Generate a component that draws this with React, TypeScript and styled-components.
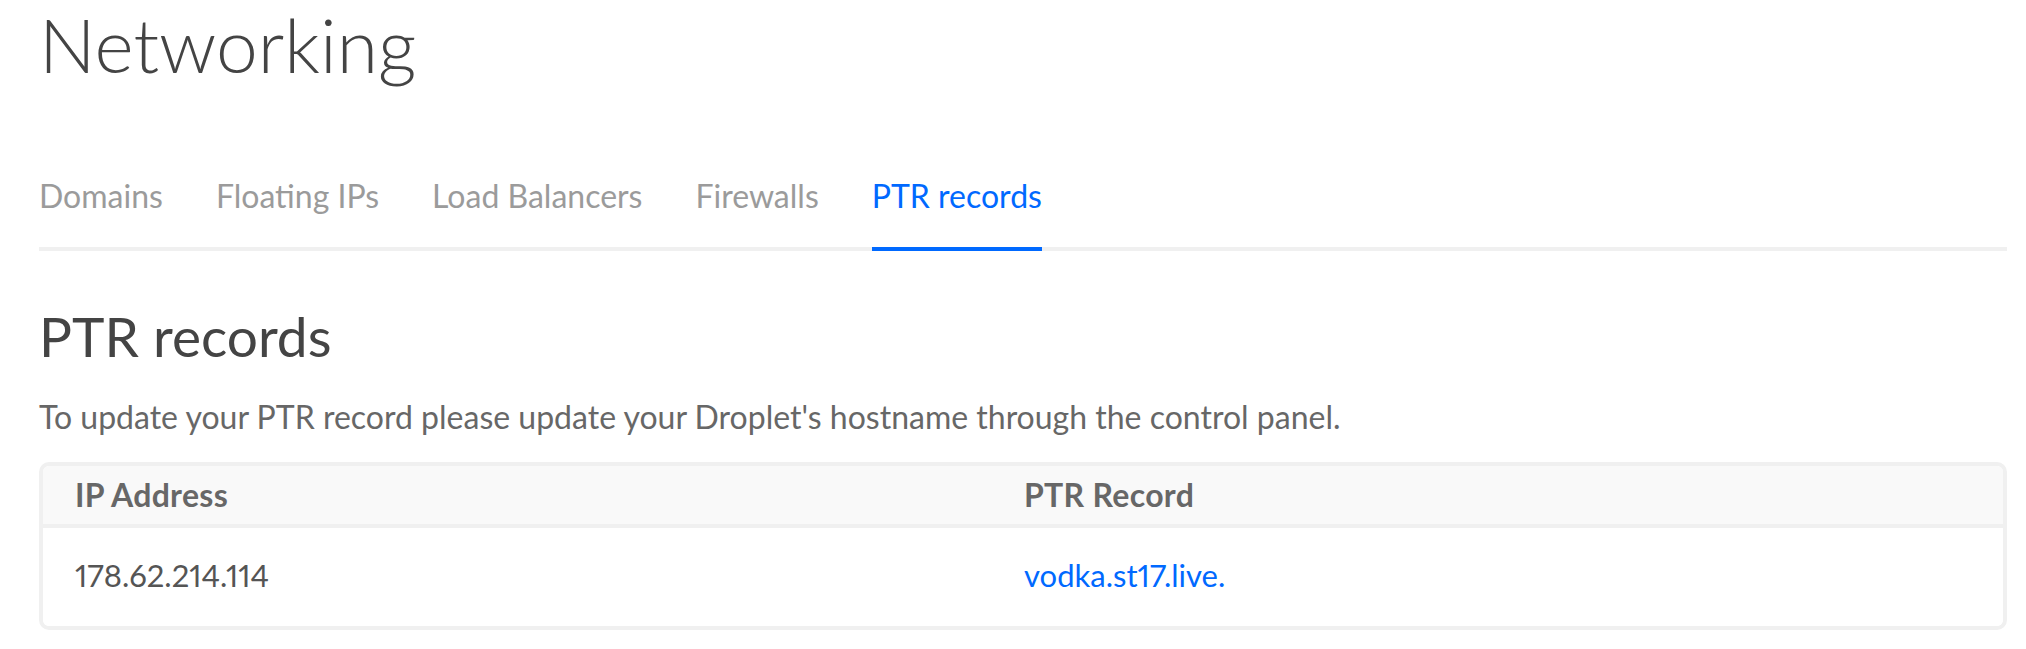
import React from "react";
import styled, { createGlobalStyle } from "styled-components";

const GlobalStyle = createGlobalStyle`
  html, body { margin: 0; padding: 0; background: #ffffff; }
  body { font-family: Lato, "Open Sans", "Liberation Sans", sans-serif; -webkit-font-smoothing: antialiased; }
`;

const Page = styled.div`
  padding: 0 19px 0 39px;
  display: flex;
  flex-direction: column;
`;

const Title = styled.h1`
  margin: 0;
  padding: 8px 0 0 0;
  font-size: 75px;
  line-height: 72px;
  font-weight: 300;
  color: #444444;
`;

const TabBar = styled.nav`
  display: flex;
  gap: 53px;
  margin-top: 96px;
  border-bottom: 4px solid #f0f0f0;
`;

const Tab = styled.a<{ $active?: boolean }>`
  display: block;
  font-size: 32px;
  line-height: 40px;
  padding-bottom: 31px;
  margin-bottom: -4px;
  color: ${(p) => (p.$active ? "#0069ff" : "#9b9b9b")};
  border-bottom: 4px solid ${(p) => (p.$active ? "#0069ff" : "transparent")};
  text-decoration: none;
  cursor: pointer;
`;

const SectionTitle = styled.h2`
  margin: 53px 0 0 0;
  font-size: 55px;
  line-height: 64px;
  font-weight: 400;
  color: #444444;
`;

const Lead = styled.p`
  margin: 29px 0 0 0;
  font-size: 32px;
  line-height: 40px;
  color: #676767;
`;

const Table = styled.div`
  margin-top: 25px;
  border: 4px solid #f0f0f0;
  border-radius: 10px;
  overflow: hidden;
`;

const Row = styled.div<{ $head?: boolean }>`
  display: grid;
  grid-template-columns: 949px 1fr;
  align-items: center;
  height: ${(p) => (p.$head ? "58px" : "98px")};
  background: ${(p) => (p.$head ? "#f9f9f9" : "#ffffff")};
  border-bottom: ${(p) => (p.$head ? "4px solid #f0f0f0" : "none")};
`;

const HeadCell = styled.div`
  padding-left: 32px;
  padding-bottom: 2px;
  font-size: 32px;
  letter-spacing: 0.3px;
  font-weight: 700;
  color: #676767;
`;

const Cell = styled.div<{ $link?: boolean }>`
  padding-left: 32px;
  padding-bottom: 4px;
  font-size: 31px;
  font-variant-numeric: proportional-nums;
  color: ${(p) => (p.$link ? "#0069ff" : "#555555")};
`;

const tabs = ["Domains", "Floating IPs", "Load Balancers", "Firewalls", "PTR records"];

export default function App() {
  return (
    <>
      <GlobalStyle />
      <Page>
        <Title>Networking</Title>
        <TabBar>
          {tabs.map((t) => (
            <Tab key={t} $active={t === "PTR records"}>
              {t}
            </Tab>
          ))}
        </TabBar>
        <SectionTitle>PTR records</SectionTitle>
        <Lead>
          To update your PTR record please update your Droplet's hostname through the control panel.
        </Lead>
        <Table>
          <Row $head>
            <HeadCell>IP Address</HeadCell>
            <HeadCell>PTR Record</HeadCell>
          </Row>
          <Row>
            <Cell>178.62.214.114</Cell>
            <Cell $link>vodka.st17.live.</Cell>
          </Row>
        </Table>
      </Page>
    </>
  );
}
